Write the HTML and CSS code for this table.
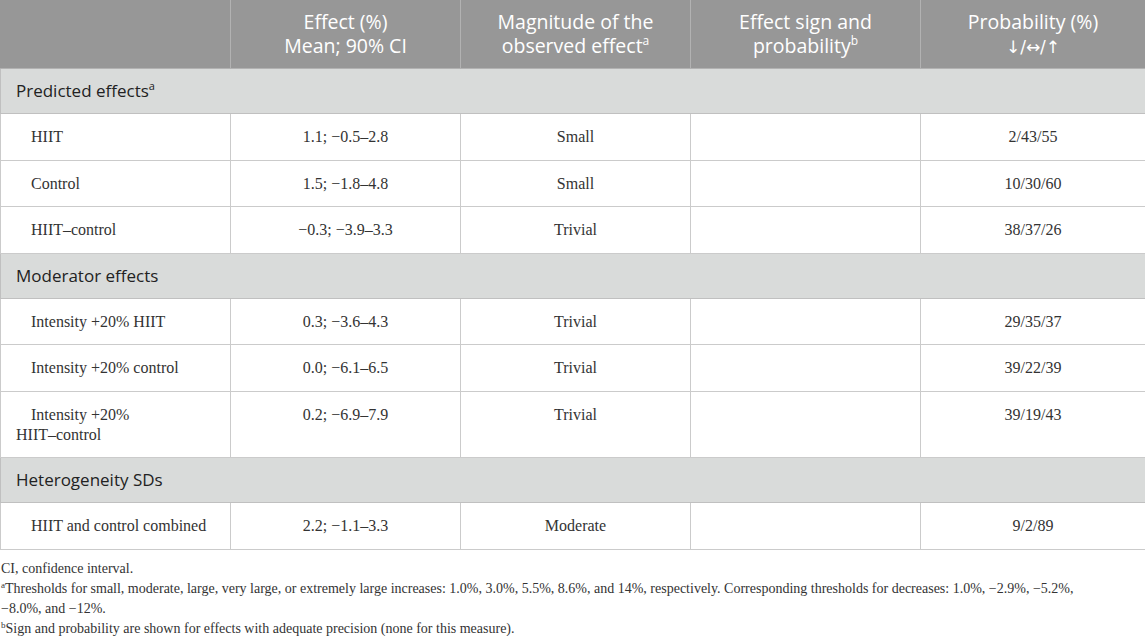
FILE: index.html
```html
<!DOCTYPE html>
<html lang="en">
<head>
	<meta charset="UTF-8">
	<title>Effects table</title>
	<link rel="stylesheet" href="styles.css">
</head>
<body>
	<table class="data-table">
		<colgroup>
			<col class="col-wide">
			<col class="col-wide">
			<col class="col-wide">
			<col class="col-wide">
			<col class="col-last">
		</colgroup>
		<thead>
			<tr>
				<th></th>
				<th>Effect (%)<br>Mean; 90% CI</th>
				<th>Magnitude of the<br>observed effect<sup>a</sup></th>
				<th>Effect sign and<br>probability<sup>b</sup></th>
				<th>Probability (%)<br><span class="arrows">&darr;/&harr;/&uarr;</span></th>
			</tr>
		</thead>
		<tbody>
			<tr class="section">
				<td colspan="5">Predicted effects<sup>a</sup></td>
			</tr>
			<tr>
				<td class="label">HIIT</td>
				<td>1.1; &minus;0.5&ndash;2.8</td>
				<td>Small</td>
				<td></td>
				<td>2/43/55</td>
			</tr>
			<tr>
				<td class="label">Control</td>
				<td>1.5; &minus;1.8&ndash;4.8</td>
				<td>Small</td>
				<td></td>
				<td>10/30/60</td>
			</tr>
			<tr>
				<td class="label">HIIT&ndash;control</td>
				<td>&minus;0.3; &minus;3.9&ndash;3.3</td>
				<td>Trivial</td>
				<td></td>
				<td>38/37/26</td>
			</tr>
			<tr class="section">
				<td colspan="5">Moderator effects</td>
			</tr>
			<tr>
				<td class="label">Intensity +20% HIIT</td>
				<td>0.3; &minus;3.6&ndash;4.3</td>
				<td>Trivial</td>
				<td></td>
				<td>29/35/37</td>
			</tr>
			<tr>
				<td class="label">Intensity +20% control</td>
				<td>0.0; &minus;6.1&ndash;6.5</td>
				<td>Trivial</td>
				<td></td>
				<td>39/22/39</td>
			</tr>
			<tr>
				<td class="label">Intensity +20%<br>HIIT&ndash;control</td>
				<td>0.2; &minus;6.9&ndash;7.9</td>
				<td>Trivial</td>
				<td></td>
				<td>39/19/43</td>
			</tr>
			<tr class="section">
				<td colspan="5">Heterogeneity SDs</td>
			</tr>
			<tr>
				<td class="label">HIIT and control combined</td>
				<td>2.2; &minus;1.1&ndash;3.3</td>
				<td>Moderate</td>
				<td></td>
				<td>9/2/89</td>
			</tr>
		</tbody>
	</table>
	<div class="notes">
		<p>CI, confidence interval.</p>
		<p><sup>a</sup>Thresholds for small, moderate, large, very large, or extremely large increases: 1.0%, 3.0%, 5.5%, 8.6%, and 14%, respectively. Corresponding thresholds for decreases: 1.0%, &minus;2.9%, &minus;5.2%, &minus;8.0%, and &minus;12%.</p>
		<p><sup>b</sup>Sign and probability are shown for effects with adequate precision (none for this measure).</p>
	</div>
</body>
</html>
```

FILE: styles.css
```css
body {
	margin: 0;
	padding: 0;
	background: #fff;
	color: #333;
	font-family: "Liberation Serif", serif;
}
.data-table {
	width: 1145px;
	border-collapse: collapse;
	table-layout: fixed;
}
.col-wide {
	width: 230px;
}
.col-last {
	width: 225px;
}
.data-table th {
	background: #979797;
	color: #fff;
	font-family: "Open Sans", sans-serif;
	font-weight: 400;
	font-size: 19.5px;
	line-height: 24px;
	height: 68px;
	padding: 0 6px;
	text-align: center;
	vertical-align: middle;
	border: 1px solid #b2b2b2;
	border-top: 0;
}
.data-table th:first-child {
	border-left: 1px solid #979797;
}
.arrows {
	font-family: "DejaVu Sans", sans-serif;
	font-size: 17px;
}
.data-table sup {
	font-size: 12px;
	line-height: 0;
	vertical-align: 8px;
}
.data-table td {
	border: 1px solid #cbcbcb;
	font-size: 16px;
	line-height: 20px;
	padding: 13px 10px 12.5px;
	text-align: center;
	vertical-align: top;
	color: #333;
}
.data-table td.label {
	text-align: left;
	padding-left: 15px;
	text-indent: 15px;
}
.section td {
	background: #d9dbda;
	font-family: "Open Sans", sans-serif;
	font-size: 17px;
	line-height: 20px;
	padding: 12px 15px;
	text-align: left;
	color: #222;
	border-color: #c0c0c0;
}
.section sup {
	font-size: 11px;
	vertical-align: 7px;
}
.notes {
	padding: 9px 0 0 0;
	font-size: 14px;
	line-height: 20.3px;
	color: #333;
	width: 1090px;
}
.notes p {
	margin: 0 0 0 1px;
}
.notes sup {
	font-size: 9px;
	line-height: 0;
	vertical-align: 5px;
}
```
